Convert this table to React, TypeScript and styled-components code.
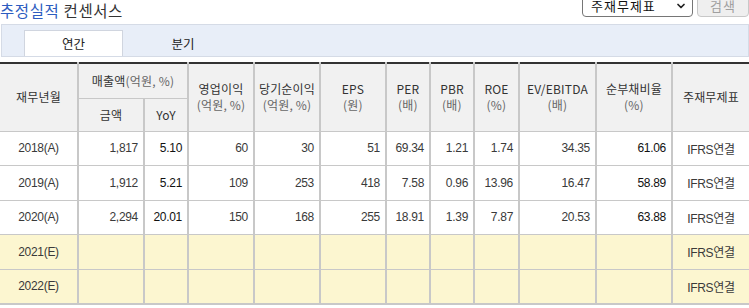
import React from 'react';
import styled, { createGlobalStyle } from 'styled-components';
import { ChevronDown } from 'lucide-react';

const GlobalStyle = createGlobalStyle`
  body {
    margin: 0;
    background: #fff;
    font-family: "Liberation Sans", "Noto Sans CJK KR", sans-serif;
    color: #333;
    overflow: hidden;
  }
`;

const Page = styled.div`
  width: 749px;
`;

const TopBar = styled.div`
  display: flex;
  justify-content: space-between;
  align-items: flex-end;
  height: 20px;
`;

const Title = styled.h2`
  margin: 0;
  font-size: 15.5px;
  font-weight: normal;
  line-height: 20px;
  color: #333;
  font-family: "Noto Sans CJK KR", sans-serif;
  letter-spacing: 0.6px;
  align-self: flex-start;

  em {
    font-style: normal;
    color: #2d5cc0;
  }
`;

const Controls = styled.div`
  display: flex;
  gap: 4px;
  height: 23px;
  margin-bottom: 3px;
`;

const SelectBox = styled.div`
  position: relative;
  width: 111px;
  height: 23px;

  svg {
    position: absolute;
    right: 6px;
    top: 6px;
    pointer-events: none;
  }
`;

const Select = styled.select`
  appearance: none;
  width: 100%;
  height: 100%;
  border: 1px solid #767676;
  border-radius: 4px;
  background: #fff;
  font-size: 13px;
  font-family: "Noto Sans CJK KR", sans-serif;
  letter-spacing: 1px;
  color: #111;
  padding: 0 8px;
`;

const SearchButton = styled.button`
  width: 52px;
  height: 23px;
  border: 1px solid #c8c8c8;
  border-radius: 4px;
  background: #efefef;
  color: #a0a0a0;
  font-size: 13px;
  font-family: "Noto Sans CJK KR", sans-serif;
  letter-spacing: 1px;
  padding: 0;
`;

const TabBar = styled.div`
  margin-top: 4px;
  height: 26px;
  padding: 5px 0 0 22px;
  display: flex;
  align-items: flex-end;
  background: #e8eef8;
  border: 1px solid #d5dbe6;
  margin-left: 1px;
`;

const Tab = styled.div<{ $active?: boolean }>`
  width: ${p => (p.$active ? 99 : 120)}px;
  height: 26px;
  box-sizing: border-box;
  display: flex;
  align-items: center;
  justify-content: center;
  font-size: 12.5px;
  font-family: "Noto Sans CJK KR", sans-serif;
  color: #222;
  background: ${p => (p.$active ? '#fff' : 'transparent')};
  border: ${p => (p.$active ? '1px solid #d0d5df' : '1px solid transparent')};
  border-bottom: none;
`;

const Table = styled.table`
  margin-top: 5px;
  width: 749px;
  table-layout: fixed;
  border-collapse: collapse;
  border-top: 2px solid #333;
  border-bottom: 2px solid #c8c8c8;
  font-size: 12px;
`;

const Th = styled.th<{ $first?: boolean }>`
  background: #f1f1f1;
  font-weight: normal;
  color: #333;
  font-family: "Noto Sans CJK KR", "Liberation Sans", sans-serif;
  font-size: 12px;
  line-height: 16px;
  text-align: center;
  padding: 0;
  border-left: ${p => (p.$first ? 'none' : '2px solid #c8c8c8')};
  border-top: 1px solid #c8c8c8;
  letter-spacing: 0.2px;

  small {
    display: block;
    font-size: 12px;
    color: #666;
  }
  span.unit {
    color: #666;
  }
`;

const HeadRow = styled.tr<{ $h: number }>`
  height: ${p => p.$h}px;
`;

const Row = styled.tr<{ $estimate?: boolean }>`
  height: 34.5px;
  background: ${p => (p.$estimate ? '#fcf6d0' : '#fff')};
`;

const Td = styled.td<{ $first?: boolean; $strong?: boolean; $center?: boolean }>`
  padding: ${p => (p.$center ? '0' : '0 5px 0 0')};
  text-align: ${p => (p.$center ? 'center' : 'right')};
  color: ${p => (p.$strong ? '#111' : '#3a3a3a')};
  font-family: "Liberation Sans", "Noto Sans CJK KR", sans-serif;
  font-size: 12px;
  letter-spacing: -0.3px;
  border-left: ${p => (p.$first ? 'none' : '2px solid #c8c8c8')};
  border-top: 1px solid #c8c8c8;
`;

const widths = [78, 66, 44, 66, 66, 66, 44, 44, 45, 77, 76, 77];

type DataRow = {
  year: string;
  values: string[];
  estimate?: boolean;
};

const rows: DataRow[] = [
  { year: '2018(A)', values: ['1,817', '5.10', '60', '30', '51', '69.34', '1.21', '1.74', '34.35', '61.06'] },
  { year: '2019(A)', values: ['1,912', '5.21', '109', '253', '418', '7.58', '0.96', '13.96', '16.47', '58.89'] },
  { year: '2020(A)', values: ['2,294', '20.01', '150', '168', '255', '18.91', '1.39', '7.87', '20.53', '63.88'] },
  { year: '2021(E)', values: Array(10).fill(''), estimate: true },
  { year: '2022(E)', values: Array(10).fill(''), estimate: true },
];

const strongCols = [1, 9];

export default function App() {
  return (
    <Page>
      <GlobalStyle />
      <TopBar>
        <Title>
          <em>추정실적</em> 컨센서스
        </Title>
        <Controls>
          <SelectBox>
            <Select defaultValue="main">
              <option value="main">주재무제표</option>
            </Select>
            <ChevronDown size={12} strokeWidth={3.5} color="#222" />
          </SelectBox>
          <SearchButton type="button">검색</SearchButton>
        </Controls>
      </TopBar>

      <TabBar>
        <Tab $active>연간</Tab>
        <Tab>분기</Tab>
      </TabBar>

      <Table>
        <colgroup>
          {widths.map((w, i) => (
            <col key={i} style={{ width: w }} />
          ))}
        </colgroup>
        <thead>
          <HeadRow $h={35}>
            <Th $first rowSpan={2}>재무년월</Th>
            <Th colSpan={2}>
              매출액<span className="unit">(억원, %)</span>
            </Th>
            <Th rowSpan={2}>영업이익<small>(억원, %)</small></Th>
            <Th rowSpan={2}>당기순이익<small>(억원, %)</small></Th>
            <Th rowSpan={2}>EPS<small>(원)</small></Th>
            <Th rowSpan={2}>PER<small>(배)</small></Th>
            <Th rowSpan={2}>PBR<small>(배)</small></Th>
            <Th rowSpan={2}>ROE<small>(%)</small></Th>
            <Th rowSpan={2}>EV/EBITDA<small>(배)</small></Th>
            <Th rowSpan={2}>순부채비율<small>(%)</small></Th>
            <Th rowSpan={2}>주재무제표</Th>
          </HeadRow>
          <HeadRow $h={33}>
            <Th>금액</Th>
            <Th>YoY</Th>
          </HeadRow>
        </thead>
        <tbody>
          {rows.map(r => (
            <Row key={r.year} $estimate={r.estimate}>
              <Td $first $center>{r.year}</Td>
              {r.values.map((v, i) => (
                <Td key={i} $strong={strongCols.includes(i)}>{v}</Td>
              ))}
              <Td $center>IFRS연결</Td>
            </Row>
          ))}
        </tbody>
      </Table>
    </Page>
  );
}
